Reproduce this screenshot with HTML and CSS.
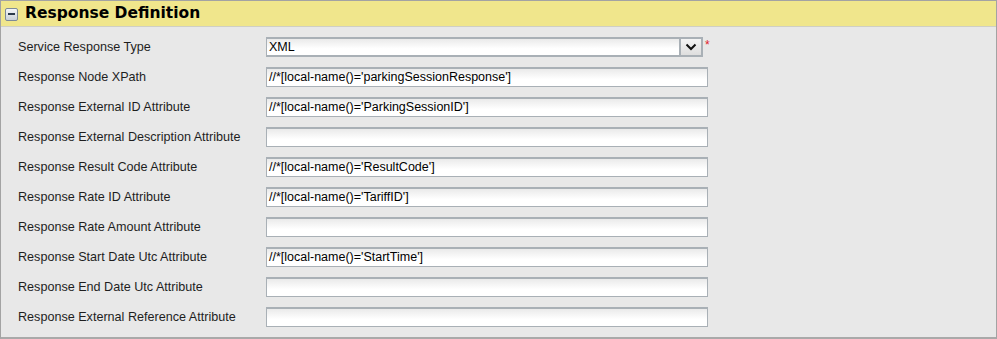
FILE: index.html
```html
<!DOCTYPE html>
<html>
<head>
<meta charset="utf-8">
<link rel="stylesheet" href="styles.css">
</head>
<body>
<div class="panel">
  <div class="header">
    <span class="toggle"><span class="bar"></span></span>
    <span class="title">Response Definition</span>
  </div>
  <div class="rows">
    <div class="row">
      <label>Service Response Type</label>
      <div class="select"><span class="val">XML</span><span class="btn"><svg width="12" height="8" viewBox="0 0 12 8"><path d="M1.5 1.5 L6 6 L10.5 1.5" fill="none" stroke="#111" stroke-width="2"/></svg></span></div>
      <span class="req">*</span>
    </div>
    <div class="row"><label>Response Node XPath</label><div class="input">//*[local-name()='parkingSessionResponse']</div></div>
    <div class="row"><label>Response External ID Attribute</label><div class="input">//*[local-name()='ParkingSessionID']</div></div>
    <div class="row"><label>Response External Description Attribute</label><div class="input"></div></div>
    <div class="row"><label>Response Result Code Attribute</label><div class="input">//*[local-name()='ResultCode']</div></div>
    <div class="row"><label>Response Rate ID Attribute</label><div class="input">//*[local-name()='TariffID']</div></div>
    <div class="row"><label>Response Rate Amount Attribute</label><div class="input"></div></div>
    <div class="row"><label>Response Start Date Utc Attribute</label><div class="input">//*[local-name()='StartTime']</div></div>
    <div class="row"><label>Response End Date Utc Attribute</label><div class="input"></div></div>
    <div class="row"><label>Response External Reference Attribute</label><div class="input"></div></div>
  </div>
</div>
</body>
</html>
```

FILE: styles.css
```css
html, body {
  margin: 0;
  padding: 0;
  background: #e8e8e8;
  font-family: Arial, "Liberation Sans", sans-serif;
}
.panel {
  width: 997px;
  height: 339px;
  box-sizing: border-box;
  border: 1px solid #a3a3a3;
  border-bottom: 2px solid #a9a9a9;
  background: #e8e8e8;
}
.header {
  height: 26px;
  background: #f0e68c;
  border-bottom: 1px solid #cfcfc4;
  display: flex;
  align-items: center;
  box-sizing: border-box;
  padding-left: 4px;
}
.toggle {
  width: 11px;
  height: 11px;
  border: 1px solid #7d8a99;
  border-radius: 2px;
  background: linear-gradient(#f4f6f8, #c9d0d8);
  display: flex;
  align-items: center;
  justify-content: center;
  margin-right: 7px;
  margin-top: 1px;
}
.toggle .bar {
  width: 7px;
  height: 2px;
  background: #2b3a4a;
}
.title {
  font-family: "DejaVu Sans", Verdana, sans-serif;
  font-weight: bold;
  font-size: 15.5px;
  color: #000;
  line-height: 18px;
  margin-top: -2px;
}
.rows {
  padding-top: 10px;
  padding-left: 17px;
}
.row {
  height: 30px;
  display: flex;
  align-items: flex-start;
}
.row label {
  width: 248px;
  font-size: 12.6px;
  color: #1e1e1e;
  line-height: 19px;
  padding-top: 1px;
}
.input, .select {
  box-sizing: border-box;
  height: 20px;
  border: 1px solid #a5acb2;
  border-width: 2px 1px 1px 1px;
  border-color: #a9b0b6;
  background: linear-gradient(#eaeaea, #ffffff 60%);
  font-size: 12.5px;
  color: #000;
  line-height: 17px;
  padding-left: 2px;
  white-space: nowrap;
  overflow: hidden;
}
.input {
  width: 442px;
}
.select {
  width: 437px;
  display: flex;
  padding-left: 0;
  border-width: 2px 2px 2px 1px;
  height: 20px;
}
.select .val {
  flex: 1;
  padding-left: 2px;
  line-height: 16px;
}
.select .btn {
  width: 22px;
  height: 16px;
  box-sizing: border-box;
  border-left: 2px solid #a9b0b6;
  background: linear-gradient(#f4f4f4, #dedede);
  display: flex;
  align-items: center;
  justify-content: center;
}
.req {
  color: #e0202a;
  font-size: 12px;
  line-height: 12px;
  margin-left: 2px;
  margin-top: 2px;
}
```
